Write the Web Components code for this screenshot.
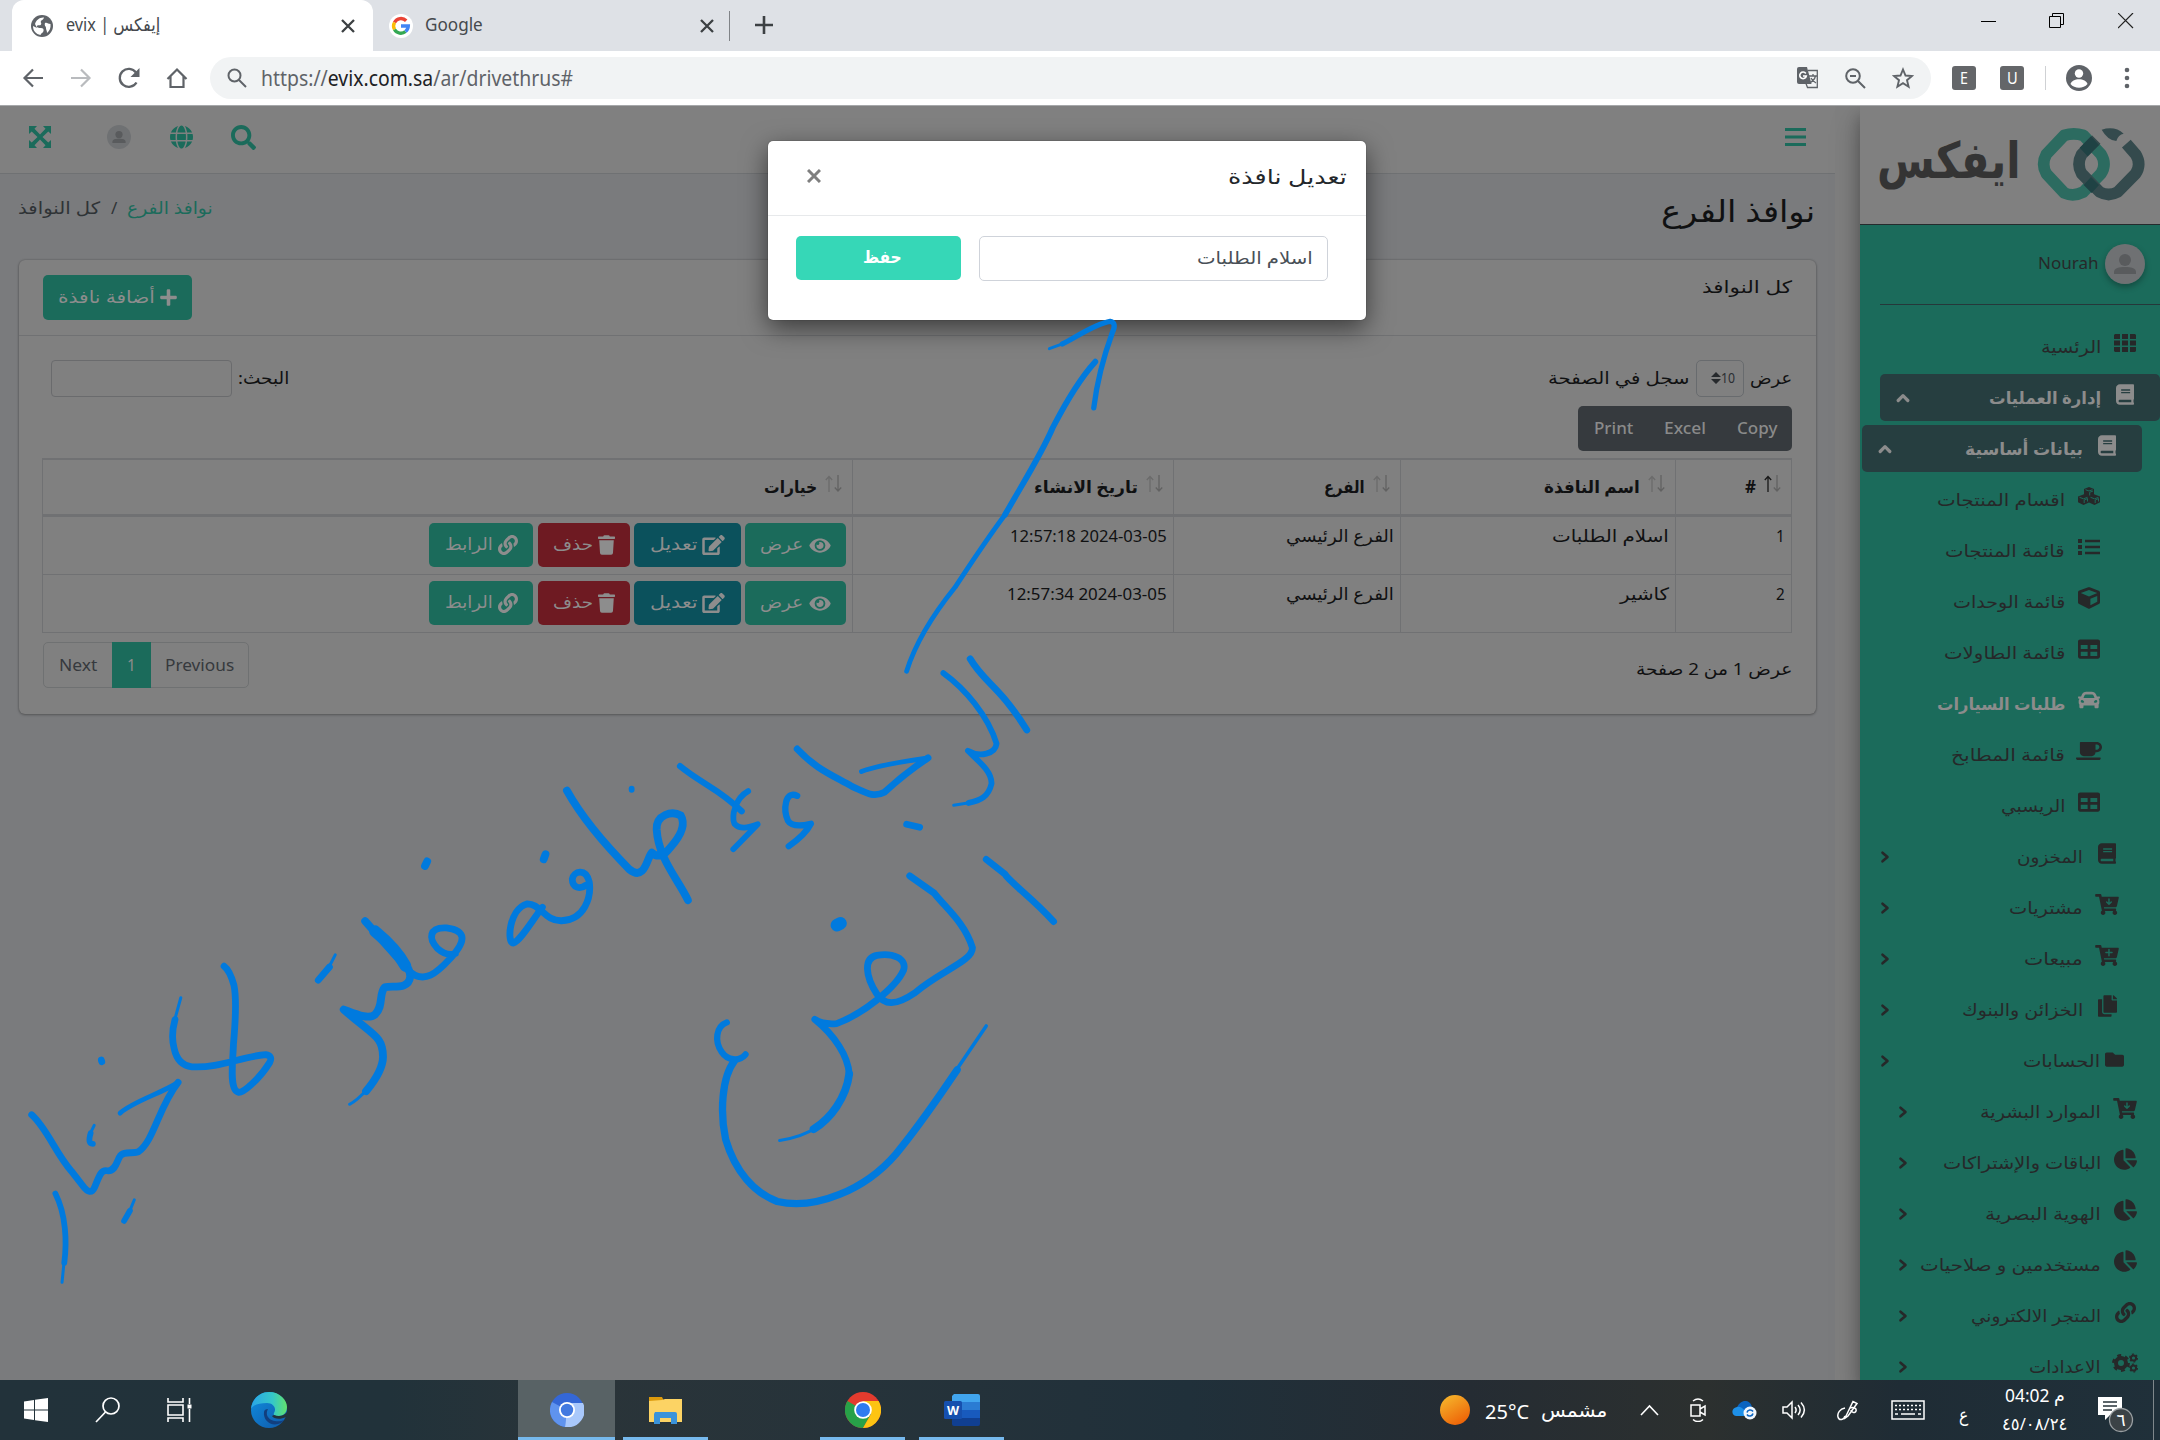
<!DOCTYPE html>
<html lang="ar">
<head>
<meta charset="utf-8">
<title>evix | إيفكس</title>
<style>
html,body{margin:0;padding:0;width:2160px;height:1440px;overflow:hidden;background:#7a7b7d}
body{display:flex;flex-direction:column;position:relative;font-family:"Noto Sans","DejaVu Sans",sans-serif}
</style>
</head>
<body>
<browser-tabs></browser-tabs>
<browser-toolbar></browser-toolbar>
<site-page></site-page>
<task-bar></task-bar>
<ink-layer></ink-layer>
<script>
const define=(name,html,after)=>{
  const t=document.createElement('template');t.innerHTML=html;
  customElements.define(name,class extends HTMLElement{
    connectedCallback(){
      if(this.shadowRoot)return;
      this.attachShadow({mode:'open'}).appendChild(t.content.cloneNode(true));
      if(after)after(this,this.shadowRoot);
    }
  });
};

/* Text fitted to a fixed advance width: w = width, s = font size, dy = baseline nudge */
define('fit-text',`<style>
:host{display:block;flex:none;white-space:nowrap}
span{display:inline-block;white-space:pre}
</style><span><slot></slot></span>`,(el,root)=>{
  const s=+el.getAttribute('s')||17,w=+el.getAttribute('w'),dy=+el.getAttribute('dy')||0;
  el.style.width=w+'px';el.style.height=Math.round(s*1.4)+'px';el.style.fontSize=s+'px';el.style.lineHeight=Math.round(s*1.4)+'px';
  const sp=root.querySelector('span');
  const rtl=/[\u0600-\u06ff]/.test(el.textContent)&&!el.hasAttribute('ltr');
  el.dir=rtl?'rtl':'ltr';
  sp.style.transformOrigin=rtl?'right center':'left center';
  const n=sp.offsetWidth;
  sp.style.transform=`translateY(${dy}px) scaleX(${w/n})`;
});

const FA={
search:['0 0 512 512','M505 442.7L405.3 343c-4.5-4.5-10.6-7-17-7H372c27.6-35.3 44-79.7 44-128C416 93.1 322.9 0 208 0S0 93.1 0 208s93.1 208 208 208c48.3 0 92.7-16.4 128-44v16.3c0 6.4 2.5 12.5 7 17l99.7 99.7c9.4 9.4 24.6 9.4 33.9 0l28.3-28.3c9.4-9.4 9.4-24.6.1-34zM208 336c-70.7 0-128-57.2-128-128 0-70.7 57.2-128 128-128 70.7 0 128 57.2 128 128 0 70.7-57.2 128-128 128z'],
globe:['0 0 496 512','M336.5 160C322 70.7 287.8 8 248 8s-74 62.7-88.5 152h177zM152 256c0 22.2 1.2 43.5 3.3 64h185.3c2.1-20.5 3.3-41.8 3.3-64s-1.2-43.5-3.3-64H155.3c-2.1 20.5-3.3 41.8-3.3 64zm324.7-96c-28.6-67.9-86.5-120.4-158-141.6 24.4 33.8 41.2 84.7 50 141.6h108zM177.2 18.4C105.8 39.6 47.8 92.1 19.3 160h108c8.7-56.9 25.5-107.8 49.9-141.6zM487.4 192H372.7c2.1 21 3.3 42.5 3.3 64s-1.2 43-3.3 64h114.6c5.5-20.5 8.6-41.8 8.6-64s-3.1-43.5-8.5-64zM120 256c0-21.5 1.2-43 3.3-64H8.6C3.2 212.5 0 233.8 0 256s3.2 43.5 8.6 64h114.6c-2-21-3.2-42.5-3.2-64zm39.5 96c14.5 89.3 48.7 152 88.5 152s74-62.7 88.5-152h-177zm159.3 141.6c71.4-21.2 129.4-73.7 158-141.6h-108c-8.8 56.9-25.6 107.8-50 141.6zM19.3 352c28.6 67.9 86.5 120.4 158 141.6-24.4-33.8-41.2-84.7-50-141.6h-108z'],
trash:['0 0 448 512','M432 32H312l-9.4-18.7A24 24 0 0 0 281.1 0H166.8a23.72 23.72 0 0 0-21.4 13.3L136 32H16A16 16 0 0 0 0 48v32a16 16 0 0 0 16 16h416a16 16 0 0 0 16-16V48a16 16 0 0 0-16-16zM53.2 467a48 48 0 0 0 47.9 45h245.8a48 48 0 0 0 47.9-45L416 128H32z'],
eye:['0 0 576 512','M572.52 241.4C518.29 135.59 410.93 64 288 64S57.68 135.64 3.48 241.41a32.35 32.35 0 0 0 0 29.19C57.71 376.41 165.07 448 288 448s230.32-71.64 284.52-177.41a32.35 32.35 0 0 0 0-29.19zM288 400a144 144 0 1 1 144-144 143.93 143.93 0 0 1-144 144zm0-240a95.31 95.31 0 0 0-25.31 3.79 47.85 47.85 0 0 1-66.9 66.9A95.78 95.78 0 1 0 288 160z'],
edit:['0 0 576 512','M402.6 83.2l90.2 90.2c3.8 3.8 3.8 10 0 13.8L274.4 405.6l-92.8 10.3c-12.4 1.4-22.9-9.1-21.5-21.5l10.3-92.8L388.8 83.2c3.8-3.8 10-3.8 13.8 0zm162-22.9l-48.8-48.8c-15.2-15.2-39.9-15.2-55.2 0l-35.4 35.4c-3.8 3.8-3.8 10 0 13.8l90.2 90.2c3.8 3.8 10 3.8 13.8 0l35.4-35.4c15.2-15.3 15.2-40 0-55.2zM384 346.2V448H64V128h229.8c3.2 0 6.2-1.3 8.5-3.5l40-40c7.6-7.6 2.2-20.5-8.5-20.5H48C21.5 64 0 85.5 0 112v352c0 26.5 21.5 48 48 48h352c26.5 0 48-21.5 48-48V306.2c0-10.7-12.9-16-20.5-8.5l-40 40c-2.2 2.3-3.5 5.3-3.5 8.5z'],
link:['0 0 512 512','M326.612 185.391c59.747 59.809 58.927 155.698.36 214.59-.11.12-.24.25-.36.37l-67.2 67.2c-59.27 59.27-155.699 59.262-214.96 0-59.27-59.26-59.27-155.7 0-214.96l37.106-37.106c9.84-9.84 26.786-3.3 27.294 10.606.648 17.722 3.826 35.527 9.69 52.721 1.986 5.822.567 12.262-3.783 16.612l-13.087 13.087c-28.026 28.026-28.905 73.66-1.155 101.96 28.024 28.579 74.086 28.749 102.325.51l67.2-67.19c28.191-28.191 28.073-73.757 0-101.83-3.701-3.694-7.429-6.564-10.341-8.569a16.037 16.037 0 0 1-6.947-12.606c-.396-10.567 3.348-21.456 11.698-29.806l21.054-21.055c5.521-5.521 14.182-6.199 20.584-1.731a152.482 152.482 0 0 1 20.522 17.197zM467.547 44.449c-59.261-59.262-155.69-59.27-214.96 0l-67.2 67.2c-.12.12-.25.25-.36.37-58.566 58.892-59.387 154.781.36 214.59a152.454 152.454 0 0 0 20.521 17.196c6.402 4.468 15.064 3.789 20.584-1.731l21.054-21.055c8.35-8.35 12.094-19.239 11.698-29.806a16.037 16.037 0 0 0-6.947-12.606c-2.912-2.005-6.64-4.875-10.341-8.569-28.073-28.073-28.191-73.639 0-101.83l67.2-67.19c28.239-28.239 74.3-28.069 102.325.51 27.75 28.3 26.872 73.934-1.155 101.96l-13.087 13.087c-4.35 4.35-5.769 10.79-3.783 16.612 5.864 17.194 9.042 34.999 9.69 52.721.509 13.906 17.454 20.446 27.294 10.606l37.106-37.106c59.271-59.259 59.271-155.699.001-214.959z'],
book:['0 0 448 512','M448 360V24c0-13.3-10.7-24-24-24H96C43 0 0 43 0 96v320c0 53 43 96 96 96h328c13.3 0 24-10.7 24-24v-16c0-7.5-3.5-14.3-8.9-18.7-4.2-15.4-4.2-59.3 0-74.7 5.4-4.3 8.9-11.1 8.9-18.6zM128 134c0-3.3 2.7-6 6-6h212c3.3 0 6 2.7 6 6v20c0 3.3-2.7 6-6 6H134c-3.3 0-6-2.7-6-6v-20zm0 64c0-3.3 2.7-6 6-6h212c3.3 0 6 2.7 6 6v20c0 3.3-2.7 6-6 6H134c-3.3 0-6-2.7-6-6v-20zm253.4 250H96c-17.7 0-32-14.3-32-32 0-17.6 14.4-32 32-32h285.4c-1.9 17.1-1.9 46.9 0 64z'],
folder:['0 0 512 512','M464 128H272l-64-64H48C21.49 64 0 85.49 0 112v288c0 26.51 21.49 48 48 48h416c26.51 0 48-21.49 48-48V176c0-26.51-21.49-48-48-48z'],
copy:['0 0 448 512','M320 448v40c0 13.255-10.745 24-24 24H24c-13.255 0-24-10.745-24-24V120c0-13.255 10.745-24 24-24h72v296c0 30.879 25.121 56 56 56h168zm0-344V0H152c-13.255 0-24 10.745-24 24v368c0 13.255 10.745 24 24 24h272c13.255 0 24-10.745 24-24V128H344c-13.2 0-24-10.8-24-24zm120.971-31.029L375.029 7.029A24 24 0 0 0 358.059 0H352v96h96v-6.059a24 24 0 0 0-7.029-16.97z'],
pie:['0 0 544 512','M527.79 288H290.5l158.03 158.03c6.04 6.04 15.98 6.53 22.19.68 38.7-36.46 65.32-85.61 73.13-140.86 1.34-9.46-6.51-17.85-16.06-17.85zm-15.83-64.8C503.72 103.74 408.26 8.28 288.8.04 279.68-.59 272 7.1 272 16.24V240h223.77c9.14 0 16.82-7.68 16.19-16.8zM224 288V50.71c0-9.55-8.39-17.4-17.84-16.06C86.99 51.49-4.1 155.6.14 280.37 4.5 408.51 114.83 513.59 243.03 511.98c50.4-.63 96.97-16.87 135.26-44.03 7.9-5.6 8.42-17.23 1.57-24.08L224 288z'],
table:['0 0 512 512','M464 32H48C21.49 32 0 53.49 0 80v352c0 26.51 21.49 48 48 48h416c26.51 0 48-21.49 48-48V80c0-26.51-21.49-48-48-48zM224 416H64v-96h160v96zm0-160H64v-96h160v96zm224 160H288v-96h160v96zm0-160H288v-96h160v96z'],
cube:['0 0 512 512','M239.1 6.3l-208 78c-18.7 7-31.1 25-31.1 45v225.1c0 18.2 10.3 34.8 26.5 42.9l208 104c13.5 6.8 29.4 6.8 42.9 0l208-104c16.3-8.1 26.5-24.8 26.5-42.9V129.3c0-20-12.4-37.9-31.1-44.9l-208-78C262 2.2 250 2.2 239.1 6.3zM256 68.4l192 72v1.1l-192 78-192-78v-1.1l192-72zm32 356V275.5l160-65v133.9l-160 80z'],
coffee:['0 0 640 512','M192 384h192c53 0 96-43 96-96h32c70.6 0 128-57.4 128-128S582.6 32 512 32H120c-13.3 0-24 10.7-24 24v232c0 53 43 96 96 96zM512 96c35.3 0 64 28.7 64 64s-28.7 64-64 64h-32V96h32zm47.7 384H48.3c-47.6 0-61-64-36-64h583.3c25 0 11.8 64-35.9 64z'],
plus:['0 0 448 512','M416 208H272V64c0-17.67-14.33-32-32-32h-32c-17.67 0-32 14.33-32 32v144H32c-17.67 0-32 14.33-32 32v32c0 17.67 14.33 32 32 32h144v144c0 17.67 14.33 32 32 32h32c17.67 0 32-14.33 32-32V304h144c17.67 0 32-14.33 32-32v-32c0-17.67-14.33-32-32-32z'],
car:['0 0 512 512','M499.99 176h-59.87l-16.64-41.6C406.38 91.63 365.57 64 319.5 64h-127c-46.06 0-86.88 27.63-103.99 70.4L71.87 176H12.01C4.2 176-1.53 183.34.37 190.91l6 24C7.7 220.25 12.5 224 18.01 224h20.07C24.65 235.73 16 252.78 16 272v48c0 16.12 6.16 30.67 16 41.93V416c0 17.67 14.33 32 32 32h32c17.67 0 32-14.33 32-32v-32h256v32c0 17.67 14.33 32 32 32h32c17.67 0 32-14.33 32-32v-54.07c9.84-11.25 16-25.8 16-41.93v-48c0-19.22-8.65-36.27-22.07-48H494c5.51 0 10.31-3.75 11.64-9.09l6-24c1.89-7.57-3.84-14.91-11.65-14.91zm-352.06-17.83c7.29-18.22 24.94-30.17 44.57-30.17h127c19.63 0 37.28 11.95 44.57 30.17L384 208H128l19.93-49.83zM96 319.8c-19.2 0-32-12.76-32-31.9S76.8 256 96 256s48 28.71 48 47.85-28.8 15.95-48 15.95zm320 0c-19.2 0-48 3.19-48-15.95S396.8 256 416 256s32 12.76 32 31.9-12.8 31.9-32 31.9z'],
cart:['0 0 576 512','M528.12 301.319l47.273-208C578.806 78.301 567.391 64 551.99 64H159.208l-9.166-44.81C147.758 8.021 137.93 0 126.529 0H24C10.745 0 0 10.745 0 24v16c0 13.255 10.745 24 24 24h69.883l70.248 343.435C147.325 417.1 136 435.222 136 456c0 30.928 25.072 56 56 56s56-25.072 56-56c0-15.674-6.447-29.835-16.824-40h209.647C430.447 426.165 424 440.326 424 456c0 30.928 25.072 56 56 56s56-25.072 56-56c0-22.172-12.888-41.332-31.579-50.405l5.517-24.276c3.413-15.018-8.002-29.319-23.403-29.319H218.117l-6.545-32h293.145c11.206 0 20.92-7.754 23.403-18.681z']
};
const CUT='fill="none" stroke="#1b6b5b" stroke-width="36" stroke-linecap="round" stroke-linejoin="round"';
const MISC={
th:['0 0 22 18','<path d="M1 0h5v5H0V1zM8 0h6v5H8zM16 0h5l1 1v4h-6zM0 6.500h6v5H0zM8 6.500h6v5H8zM16 6.500h6v5h-6zM0 13h6v5H1l-1-1zM8 13h6v5H8zM16 13h6v4l-1 1h-5z"/>'],
list:['0 0 22 18','<path d="M0 1h4v4H0zM0 7h4v4H0zM0 13h4v4H0zM7 1.700h15v2.600H7zM7 7.700h15v2.600H7zM7 13.700h15v2.600H7z"/>'],
cubes:['0 0 22 18','<path fill="currentColor" d="M11 0l5 2v5.200l6 2.300v5.700L16.500 18 11 15.400 5.500 18 0 15.200V9.500l6-2.300V2z"/><g fill="none" stroke="#1b6b5b" stroke-width="1"><path d="M7.500 2.700L11 4l3.500-1.300M11.700 8.500V5.300L15 4M1.500 10.300l4 1.500 4-1.500M6.200 16v-3l3.300-1.500V14.500M12.500 10.300l4 1.500 4-1.500M17.200 16v-3l3.300-1.500V14.500"/></g>'],
cartdown:['0 0 576 512',`<path d="${FA.cart[1]}"/><path ${CUT} d="M336 120v128M280 195l56 56 56-56"/>`],
cartplus:['0 0 576 512',`<path d="${FA.cart[1]}"/><path ${CUT} d="M336 110v150M261 185h150"/>`],
cogs:['0 0 26 18','<g fill="none" stroke="currentColor"><circle cx="9" cy="9" r="5" stroke-width="4"/><circle cx="9" cy="9" r="7.700" stroke-width="2.400" stroke-dasharray="4 4.060"/><circle cx="21.500" cy="4" r="2.600" stroke-width="2"/><circle cx="21.500" cy="4" r="3.900" stroke-width="1.200" stroke-dasharray="2 2.080"/><circle cx="21.500" cy="14" r="2.600" stroke-width="2"/><circle cx="21.500" cy="14" r="3.900" stroke-width="1.200" stroke-dasharray="2 2.080"/></g>'],
up:['0 0 14 14','<path fill="none" stroke="currentColor" stroke-width="3.200" stroke-linecap="round" stroke-linejoin="round" d="M2.200 9.500L7 4.700l4.800 4.800"/>'],
right:['0 0 14 14','<path fill="none" stroke="currentColor" stroke-width="2.600" stroke-linecap="round" stroke-linejoin="round" d="M4.500 2.700L9.500 7l-5 4.300"/>'],
expand:['0 0 24 24','<path d="M1 1h8L6.500 3.700 12 9.500l5.500-5.800L15 1h8v8l-2.700-2.500L14.500 12l5.800 5.500L23 15v8h-8l2.500-2.700L12 14.500l-5.500 5.800L9 23H1v-8l2.700 2.500L9.500 12 3.700 6.500 1 9z"/>'],
person:['0 0 40 40','<circle cx="20" cy="20" r="20" fill="#6f7173"/><circle cx="20" cy="16" r="6" fill="#595b5d"/><path fill="#595b5d" d="M9 30v-2c0-4 5-5 11-5s11 1 11 5v2z"/>']
};
customElements.define('app-icon',class extends HTMLElement{
  connectedCallback(){
    if(this.shadowRoot)return;
    const n=this.getAttribute('n'),w=this.getAttribute('w')||20,h=this.getAttribute('h')||w;
    const [vb,body]=FA[n]?[FA[n][0],`<path d="${FA[n][1]}"/>`]:MISC[n];
    this.attachShadow({mode:'open'}).innerHTML=`<style>:host{display:block;flex:none;width:${w}px;height:${h}px}svg{display:block;fill:currentColor}</style><svg width="${w}" height="${h}" viewBox="${vb}">${body}</svg>`;
  }
});

define('browser-tabs',`<style>
:host{display:flex;height:51px;background:#dee1e6;align-items:stretch;color:#45494d}
.tab{display:flex;align-items:center;width:361px;margin-left:12px;box-sizing:border-box;padding:0 18px 0 19px;background:#fff;border-radius:12px 12px 0 0}
.tab svg:last-child{margin-left:auto}
.two{display:flex;align-items:center;width:357px;box-sizing:border-box;padding:0 15px 0 16px;border-right:1.500px solid #808387;height:30px;margin-top:11px}
.two svg:last-child{margin-left:auto}
fit-text{margin-left:13px}
.two fit-text{margin-left:12px}
.plus{margin:14px 0 0 25px}
.win{margin-left:auto;display:flex;align-items:center;gap:53px;padding:0 26px 9px 0}
</style>
<div class="tab"><svg width="22" height="22" viewBox="0 0 22 22"><circle cx="11" cy="11" r="11" fill="#5f6368"/><path fill="#fff" d="M13 2.500c-1 3-2 2-3 3.500s1 2 0 3.500-3 0-4 1.500 2 2 4 2 3 1 2.500 3-2.500 2-3 4C5 19 2 16 2 11l4 2-2-4C5 5 9 2 13 2.500zM14 8c2-1 3 1 5.500 1 .5 4-1 7-3.500 9 0-3-1-3-1-5s-2-2-1-5z"/></svg><fit-text w="94" s="18" dy="-1" ltr>evix | إيفكس</fit-text><svg width="14" height="14" viewBox="0 0 14 14"><path stroke="#3c4043" stroke-width="2.300" d="M1 1l12 12M13 1L1 13"/></svg></div>
<div class="two"><svg width="24" height="24" viewBox="0 0 24 24"><circle cx="12" cy="12" r="12" fill="#fff"/><g fill="none" stroke-width="3.400"><path stroke="#ea4335" d="M5.500 8.500a7.300 7.300 0 0 1 11.700-1.700"/><path stroke="#fbbc05" d="M5.500 15.500a7.300 7.300 0 0 1 0-7"/><path stroke="#34a853" d="M5.500 15.500a7.300 7.300 0 0 0 11 2"/><path stroke="#4285f4" d="M12 12h7.300a7.300 7.300 0 0 1-2.800 5.500"/></g></svg><fit-text w="58" s="18" dy="-2">Google</fit-text><svg width="14" height="14" viewBox="0 0 14 14"><path stroke="#3c4043" stroke-width="2.300" d="M1 1l12 12M13 1L1 13"/></svg></div>
<svg class="plus" width="18" height="22" viewBox="0 0 18 22"><path stroke="#3c4043" stroke-width="2.600" d="M9 2v18M0 11h18"/></svg>
<div class="win"><svg width="15" height="15"><path d="M0 7.500h15" stroke="#000"/></svg><svg width="16" height="16" fill="none" stroke="#000"><path d="M.5 3.500h11v11H.5zM3.500 3.500v-3h11v11h-3"/></svg><svg width="16" height="16" stroke="#222" stroke-width="1.200"><path d="M0 0l15 15M15 0L0 15"/></svg></div>`);

define('browser-toolbar',`<style>
:host{display:flex;height:55px;box-sizing:border-box;background:#fff;border-bottom:1px solid #a6a8aa;align-items:center;padding:0 22px 0 22px;color:#5f6368}
.nav{display:flex;gap:26px;width:188px}
.omni{display:flex;align-items:center;width:1721px;height:42px;border-radius:21px;background:#f1f3f4;box-sizing:border-box;padding:0 17px 0 17px}
.omni .r{margin-left:auto;display:flex;gap:26px;align-items:center}
fit-text{margin-left:14px}
b{font-weight:400;color:#202124}
.ext{display:grid;place-items:center;width:24px;height:24px;border-radius:3px;background:#646669;color:#fff;margin-left:24px}
.ext fit-text{margin:0}
.omni+.ext{margin-left:21px}
.bar{width:1px;height:24px;background:#cfd1d4;margin-left:21px}
.me{margin-left:20px}.dots{margin-left:32px}
svg{display:block;flex:none}
</style>
<div class="nav"><svg width="22" height="22" fill="none" stroke="currentColor" stroke-width="2.200"><path d="M21 11H3M11 2.500L2.500 11l8.500 8.500"/></svg><svg width="22" height="22" fill="none" stroke="#b9bbbe" stroke-width="2.200"><path d="M1 11h18M11 2.500l8.500 8.500-8.500 8.500"/></svg><svg width="22" height="22" fill="none" stroke="currentColor" stroke-width="2.300"><path d="M18.500 15.500a9 9 0 1 1-.5-10"/><path fill="currentColor" stroke="none" d="M21.500 1v9h-9z"/></svg><svg width="22" height="22" fill="none" stroke="currentColor" stroke-width="2.200"><path d="M1.500 12L11 2.500l9.500 9.500M4.500 9.500V20h13V9.500"/></svg></div>
<div class="omni"><svg width="20" height="20" fill="none" stroke="currentColor" stroke-width="2"><circle cx="7.500" cy="7.500" r="6"/><path d="M12 12l7 7"/></svg><fit-text w="312" s="21" dy="0">https://<b>evix.com.sa</b>/ar/drivethrus#</fit-text>
<div class="r"><svg width="22" height="22"><path fill="#5f6368" d="M2 0h8l4.500 17H2a2 2 0 0 1-2-2V2a2 2 0 0 1 2-2z"/><path fill="none" stroke="#5f6368" stroke-width="1.300" d="M11 3.500h9.300v17H10.500L9 16.500M12 9h8M16 7v2M18.500 9c-1 4-4 6-6 7M14 11c1 2 3 4 5 5"/><path fill="none" stroke="#fff" stroke-width="1.600" d="M8.800 6.500A3.300 3.300 0 1 0 9.300 9H6"/></svg><svg width="21" height="21" fill="none" stroke="currentColor" stroke-width="2"><circle cx="8" cy="8" r="6.800"/><path d="M5 8h6M13 13l7 7"/></svg><svg width="22" height="22" fill="none" stroke="currentColor" stroke-width="1.900"><path d="M11 2.500l2.500 6 6.500.5-5 4.200 1.600 6.500L11 16.200l-5.600 3.500L7 13.200 2 9l6.500-.5z"/></svg></div></div>
<div class="ext"><fit-text w="8" s="16">E</fit-text></div><div class="ext"><fit-text w="11" s="16">U</fit-text></div><div class="bar"></div>
<svg class="me" width="26" height="26"><circle cx="13" cy="13" r="13" fill="#5f6368"/><circle cx="13" cy="8.500" r="4.200" fill="#fff"/><path fill="#fff" d="M4.500 19c1.500-6.500 15.500-6.500 17 0-4 5-13 5-17 0z"/></svg>
<svg class="dots" width="6" height="22" fill="#5f6368"><circle cx="3" cy="3" r="2.300"/><circle cx="3" cy="11" r="2.300"/><circle cx="3" cy="19" r="2.300"/></svg>`);

define('site-page',`<style>
:host{display:flex;height:1274px;position:relative;background:#7f7f7f;overflow:hidden}
main{width:1835px;margin-right:25px;background:#7a7b7d;display:flex;flex-direction:column}
</style>
<main><page-header></page-header><page-title></page-title><windows-card></windows-card></main>
<side-bar></side-bar><edit-modal></edit-modal>`);

define('page-header',`<style>
:host{display:flex;height:68px;box-sizing:border-box;background:#808080;border-bottom:1px solid #6f7173;align-items:center;padding:0 29px 5px 28px;color:#1b6b5b}
.a{margin-left:55px}.g{margin-left:39px}.s{margin-left:38px}
svg{margin-left:auto}
</style>
<app-icon n="expand" w="24"></app-icon><app-icon class="a" n="person" w="24"></app-icon><app-icon class="g" n="globe" w="23" h="24"></app-icon><app-icon class="s" n="search" w="25"></app-icon>
<svg width="21" height="19" fill="#1b6b5b"><path d="M0 0h21v3H0zM0 7.500h21v3H0zM0 15h21v3H0z"/></svg>`);

define('page-title',`<style>
:host{display:flex;height:86px;box-sizing:border-box;padding:0 20px 16px 18px;align-items:center;color:#2f3336}
.c{color:#1b6b5b;margin-left:10px}.s{margin-left:11px}.h{margin-left:auto;color:#101112}
</style>
<fit-text w="82" s="17" dy="-1">كل النوافذ</fit-text><fit-text class="s" w="6" s="17" dy="-1">/</fit-text><fit-text class="c" w="86" s="17" dy="-1">نوافذ الفرع</fit-text><fit-text class="h" w="154" s="30" dy="2">نوافذ الفرع</fit-text>`);

define('act-button',`<style>
:host{display:flex;direction:rtl;height:44px;align-items:center;justify-content:center;gap:5px;border-radius:5px;background:#1b6b5b;color:#8d8d8d;flex:none}
</style><slot></slot>`);

define('sort-arrows',`<style>:host{display:block;flex:none;width:17px;height:18px}</style>
<svg width="17" height="18" fill="none" stroke-width="1.300"><g id="u" stroke="#6b6b6b"><path d="M4 17V2M.8 5L4 1.500 7.200 5"/></g><path stroke="#626262" d="M13 0v16M9.800 12.500L13 16l3.200-3.500"/></svg>`,
(el,r)=>{if(el.hasAttribute('asc'))r.getElementById('u').setAttribute('stroke','#181818')});

define('windows-table',`<style>
:host{display:block;width:1750px;box-sizing:border-box;border-top:2px solid #707173;border-right:1px solid #707173;color:#101112}
.row{display:grid;direction:rtl;grid-template-columns:116px 275px 227px 321px 810px;height:58px;box-sizing:border-box;border-bottom:1px solid #707173}
.row>div{border-left:1px solid #707173;display:flex;align-items:flex-start;padding:7px 6px 0 0;box-sizing:border-box;gap:4px}
.head{height:57px;border-bottom:3px solid #707173;font-weight:700}
.head>div{padding:15px 10px 0 0;gap:8px}
.red{background:#6e1a22}.teal{background:#0b515c}
.row>div.o{padding:6px 6px 0 0}
.red{margin-left:1px}
</style>
<div class="row head"><div><sort-arrows asc></sort-arrows><fit-text w="11" s="17">#</fit-text></div><div><sort-arrows></sort-arrows><fit-text w="96" s="17">اسم النافذة</fit-text></div><div><sort-arrows></sort-arrows><fit-text w="41" s="17">الفرع</fit-text></div><div><sort-arrows></sort-arrows><fit-text w="104" s="17">تاريخ الانشاء</fit-text></div><div><sort-arrows></sort-arrows><fit-text w="53" s="17">خيارات</fit-text></div></div>
<div id="rows"></div>`,(el,r)=>{
  const btns=`<act-button style="width:101px"><app-icon n="eye" w="22" h="19"></app-icon><fit-text w="43" s="17" dy="-1">عرض</fit-text></act-button><act-button class="teal" style="width:107px"><app-icon n="edit" w="23" h="20"></app-icon><fit-text w="47" s="17" dy="-1">تعديل</fit-text></act-button><act-button class="red" style="width:92px"><app-icon n="trash" w="17" h="20"></app-icon><fit-text w="40" s="17" dy="-1">حذف</fit-text></act-button><act-button style="width:104px"><app-icon n="link" w="20"></app-icon><fit-text w="48" s="17" dy="-1">الرابط</fit-text></act-button>`;
  r.getElementById('rows').innerHTML=[['1',9,'اسلام الطلبات',117,'12:57:18',157],['2',9,'كاشير',49,'12:57:34',160]].map(([n,nw,t,w,d,dw])=>
   `<div class="row"><div><fit-text w="${nw}" s="17">${n}</fit-text></div><div><fit-text w="${w}" s="17">${t}</fit-text></div><div><fit-text w="108" s="17">الفرع الرئيسي</fit-text></div><div><fit-text w="${dw}" s="17">${d} 2024-03-05</fit-text></div><div class="o">${btns}</div></div>`).join('');
});

define('windows-card',`<style>
:host{display:block;width:1797px;height:454px;margin-left:19px;box-sizing:border-box;background:#808080;border-radius:6px;box-shadow:0 0 2px rgba(0,0,0,.25),0 1px 3px rgba(0,0,0,.25);color:#101112}
.head{display:flex;height:76px;box-sizing:border-box;border-bottom:1px solid #707173;padding:15px 24px 0;justify-content:space-between}
.head act-button{width:149px;height:45px}
.ctl{display:flex;height:38px;margin-top:23px;padding:0 24px 0 32px;align-items:center;gap:6px}
.in{width:181px;height:37px;box-sizing:border-box;border:1px solid #6a6b6d;border-radius:4px}
.sel{width:48px;height:37px;box-sizing:border-box;border:1px solid #686b6e;border-radius:5px;display:flex;align-items:center;padding-left:14px;gap:0;color:#2a2e32}
.sp{flex:1}
.grp{display:flex;width:214px;height:45px;box-sizing:border-box;margin:9px 24px 7px auto;padding:0 15px 0 16px;justify-content:space-between;align-items:center;border-radius:5px;background:#363a3e;color:#8a8a8a;font-weight:500}
windows-table{margin-left:23px}
.foot{display:flex;justify-content:space-between;padding:9px 24px 0;align-items:flex-start}
.pg{display:flex;width:206px;height:46px;box-sizing:border-box;border:1px solid #6f7172;border-radius:5px;align-items:center;color:#36393d}
.pg b{display:grid;place-items:center;width:39px;height:46px;background:#1b6b5b;color:#8d8d8d;font-weight:400;margin:0 14px 0 15px}
</style>
<div class="head"><act-button><app-icon n="plus" w="17" h="19"></app-icon><fit-text w="97" s="17" dy="-1">أضافة نافذة</fit-text></act-button><fit-text w="90" s="17">كل النوافذ</fit-text></div>
<div class="ctl"><div class="in"></div><fit-text w="51" s="17">البحث:</fit-text><div class="sp"></div><fit-text w="142" s="17">سجل في الصفحة</fit-text><div class="sel"><svg width="10" height="12" fill="#26292c"><path d="M0 5L5 0l5 5zM0 7h10l-5 5z"/></svg><fit-text w="14" s="14">10</fit-text></div><fit-text w="42" s="17">عرض</fit-text></div>
<div class="grp"><fit-text w="39" s="17" dy="-1">Print</fit-text><fit-text w="42" s="17" dy="-1">Excel</fit-text><fit-text w="40" s="17" dy="-1">Copy</fit-text></div>
<windows-table></windows-table>
<div class="foot"><div class="pg"><fit-text style="margin-left:15px" w="38" s="17">Next</fit-text><b><fit-text w="9" s="17">1</fit-text></b><fit-text w="69" s="17">Previous</fit-text></div><fit-text style="margin-top:15px" w="156" s="17">عرض 1 من 2 صفحة</fit-text></div>`);

define('brand-logo',`<style>
:host{display:flex;flex:none;box-sizing:border-box;height:119px;background:#808080;border-bottom:1px solid #252b2d;align-items:center;justify-content:space-between;padding:0 15px 0 17px;color:#343434;font-weight:700;font-family:"DejaVu Sans",sans-serif}
</style>
<fit-text w="144" s="50" dy="-4">ايفكس</fit-text>
<svg width="108" height="76" viewBox="890 380 324 228" style="margin-top:-1px"><g fill="none" stroke-width="35" stroke-linejoin="round"><path stroke="#2c6b60" d="M972 405Q1000 396 1029 405L1082 462Q1100 492 1082 520L1029 575Q1000 590 972 578L918 520Q902 492 918 462Z"/><path stroke="#344a4d" d="M1068 418L1024 462Q1008 492 1024 520L1078 575Q1105 590 1132 575L1186 520Q1204 492 1186 462L1158 430"/></g><path fill="#1f4244" d="M1052 408l24 26-34 34-24-26zM1052 530l24 24-22 24-24-24z"/><path fill="#344a4d" d="M1084 388q40-12 66 12q-16 2-22 22q-26-2-44-34z"/></svg>`);

define('side-item',`<style>
:host{display:flex;direction:rtl;width:280px;height:47px;box-sizing:border-box;margin:0 0 4px auto;padding-right:21px;align-items:center;border-radius:5px;color:#262829;flex:none}
:host([lv="2"]){margin-right:18px}:host([lv="3"]){margin-right:36px;width:260px}
:host([on]){background:#263e40;color:#8c8c8c;font-weight:700}
:host([cur]){color:#8c8c8c;font-weight:700}
.i{width:28px;display:grid;justify-items:center;margin:-7px 0 0 10px}
.c{margin:0 auto 0 16px}
:host([near]){padding-right:15px}:host([near]) .i{margin:-3px 0 0 2px;width:25px}
</style><div class="i"></div><slot></slot><div class="c"></div>`,(el,r)=>{
  const k=el.getAttribute('i'),sz={th:[22,18],book:[18,21],cubes:[22,18],list:[22,18],cube:[22,22],table:[22,22],car:[22,22],coffee:[26,22],cartdown:[24,21],cartplus:[24,21],copy:[19,22],folder:[19,19],pie:[23,22],link:[21,21],cogs:[26,20]}[k];
  r.querySelector('.i').innerHTML=`<app-icon n="${k}" w="${sz[0]}" h="${sz[1]}"></app-icon>`;
  const c=el.getAttribute('c');if(c)r.querySelector('.c').innerHTML=`<app-icon n="${c}" w="14"></app-icon>`;
});

define('side-bar',`<style>
:host{display:flex;flex-direction:column;width:300px;height:1274px;overflow:hidden;background:#1b6b5b;flex:none;box-shadow:0 14px 28px rgba(0,0,0,.25),0 10px 14px rgba(0,0,0,.22)}
.user{display:flex;height:80px;box-sizing:border-box;margin-left:20px;border-bottom:1px solid #25383a;padding:0 15px 2px 0;align-items:center;justify-content:flex-end;gap:7px;color:#262829;flex:none}
.user app-icon{border-radius:50%;box-shadow:0 3px 6px rgba(0,0,0,.3)}
nav{display:flex;flex-direction:column;padding-top:18px}
</style><brand-logo></brand-logo><div class="user"><fit-text w="60" s="17" dy="-1">Nourah</fit-text><app-icon n="person" w="40"></app-icon></div><nav></nav>`,(el,r)=>{
  r.querySelector('nav').innerHTML=[
  [1,'th','الرئسية',60],[1,'book','إدارة العمليات',112,'up','on'],[2,'book','بيانات أساسية',118,'up','on'],
  [3,'cubes','اقسام المنتجات',128],[3,'list','قائمة المنتجات',120],[3,'cube','قائمة الوحدات',112],[3,'table','قائمة الطاولات',121],[3,'car','طلبات السيارات',128,'','cur'],[3,'coffee','قائمة المطابخ',114],[3,'table','الريسبي',64],
  [2,'book','المخزون',66,'right'],[2,'cartdown','مشتريات',74,'right'],[2,'cartplus','مبيعات',59,'right'],[2,'copy','الخزائن والبنوك',121,'right'],[2,'folder','الحسابات',77,'right','near'],
  [1,'cartdown','الموارد البشرية',121,'right'],[1,'pie','الباقات والإشتراكات',158,'right'],[1,'pie','الهوية البصرية',116,'right'],[1,'pie','مستخدمين و صلاحيات',181,'right'],[1,'link','المتجر الالكتروني',130,'right'],[1,'cogs','الاعدادات',72,'right']
  ].map(([l,i,t,w,c,f])=>`<side-item lv="${l}" i="${i}" ${c?`c="${c}"`:''} ${f||''}><fit-text w="${w}" s="17">${t}</fit-text></side-item>`).join('');
});

/* Dialog floats over the dimmed page */
define('edit-modal',`<style>
:host{position:absolute;left:768px;top:35px;width:598px;height:179px;background:#fff;border-radius:5px;box-shadow:0 0 1px #222,0 8px 26px rgba(0,0,0,.55);display:flex;flex-direction:column}
.h{display:flex;height:75px;box-sizing:border-box;border-bottom:1px solid #e7e9eb;align-items:center;justify-content:space-between;padding:0 19px 3px 39px;color:#23272b}
.h svg{margin-top:-2px}
.b{display:flex;padding:20px 38px 0 28px;gap:18px;align-items:flex-start}
act-button{width:165px;height:44px;background:#36d7b7;color:#fff;font-weight:700}
act-button fit-text{margin-left:4px;position:static}
.sp{width:4px;flex:none;order:2}
.in{display:flex;width:350px;height:45px;box-sizing:border-box;border:1px solid #cfd3da;border-radius:5px;align-items:center;justify-content:flex-end;padding-right:14px;color:#495057}
act-button{box-sizing:border-box;padding-left:8px}
</style>
<div class="h"><svg width="14" height="14"><path stroke="#7f7f7f" stroke-width="3" d="M1 1l12 12M13 1L1 13"/></svg><fit-text w="119" s="20">تعديل نافذة</fit-text></div>
<div class="b"><act-button><fit-text w="39" s="17" dy="-1" style="margin:0">حفظ</fit-text></act-button><div class="in"><fit-text w="116" s="17" dy="-1">اسلام الطلبات</fit-text></div></div>`);

/* Pen strokes: every entry is [stroke width, path] */
define('ink-layer',`<style>:host{position:absolute;left:0;top:0;width:2160px;height:1440px;pointer-events:none}svg{display:block}</style>
<svg width="2160" height="1440" fill="none" stroke="#007ade" stroke-linecap="round" stroke-linejoin="round"><g id="a" transform="translate(0 640) scale(.4464 .4209)"></g><g id="b" transform="translate(540 300) scale(.3827 .5931)"></g></svg>`,(el,r)=>{
  const put=(id,list)=>r.getElementById(id).innerHTML=list.map(([w,d])=>`<path vector-effect="non-scaling-stroke" stroke-width="${w<4?w:w+.8}" d="${d}"/>`).join('');
  put('a',[
  [6,'M71 1128C105 1160 125 1220 160 1262L185 1296Q203 1322 212 1300C222 1275 226 1258 240 1261C258 1264 262 1238 268 1228C275 1212 300 1222 310 1216C345 1190 355 1110 399 1051'],[4,'M399 1051C360 1078 300 1095 269 1124'],
  [5,'M124 1315C148 1365 150 1430 144 1480'],[3,'M145 1460L139 1526'],[3,'M301 1330L290 1358'],[5,'M291 1356L278 1380'],
  [3,'M211 1153L201 1175'],[5,'M203 1172C198 1190 200 1197 208 1197'],[6,'M227 998L228 1002'],
  [3,'M405 850L392 900'],[6,'M392 902C386 925 385 950 390 970C396 1000 410 1012 430 1014C490 1018 540 990 595 985Q612 988 604 1004C580 1045 545 1075 535 1075C512 1070 522 1000 523 960C528 900 530 850 524 820Q515 785 502 775'],
  [3,'M751 748L738 775'],[6,'M738 777L713 808'],
  [3,'M783 1103C798 1096 812 1080 825 1065'],[7,'M820 1072C845 1040 858 1010 858 990C858 940 835 940 770 878C800 890 825 902 840 890C860 870 848 840 862 825C880 820 915 832 919 800C918 785 915 780 905 765'],
  [7,'M818 668L910 778'],[11,'M840 692C870 718 892 742 908 774'],
  [6,'M915 785C950 820 980 790 1010 755C1045 715 1045 690 1000 684C960 682 960 710 980 733Q1000 752 1020 745'],
  [7,'M957 526L952 537'],[7,'M1222 509L1218 521'],
  [6,'M1215 635C1190 670 1165 715 1150 720C1135 720 1140 640 1180 627C1210 625 1220 668 1258 667C1310 665 1325 610 1320 575C1312 540 1285 550 1282 568C1282 590 1300 592 1312 583'],
  [5,'M1415 353L1415 356'],
  [7,'M1270 358C1300 415 1340 470 1410 545C1445 575 1450 515 1460 505C1475 520 1490 510 1500 495C1530 460 1535 435 1525 417C1505 405 1470 415 1471 450C1475 520 1520 570 1541 618']]);
  put('b',[
  [4,'M958 626C985 570 1040 520 1085 484C1140 430 1160 410 1215 362'],[5,'M1215 362C1270 300 1310 260 1340 215Q1400 140 1451 104'],
  [3,'M1331 82L1365 74'],[4.500,'M1365 74C1400 63 1450 40 1490 36Q1508 38 1495 56C1470 100 1455 140 1447 182'],
  [6,'M1124 605C1160 645 1200 650 1272 725'],
  [5,'M1054 629C1110 655 1170 700 1193 748C1190 765 1150 772 1118 760C1150 780 1180 795 1180 815C1172 838 1150 844 1120 848'],[3,'M1130 847L1081 852'],
  [6,'M958 884L992 889'],
  [4,'M840 795C880 785 950 778 1014 772'],[6,'M1014 772C960 795 930 812 900 830C870 840 850 830 815 820C760 800 720 790 672 757'],
  [5.500,'M672 836C640 826 635 860 648 878C660 890 690 886 708 883C695 900 670 912 650 921'],
  [5.500,'M366 786C420 815 470 825 527 862'],
  [5,'M544 828C510 840 500 870 508 883C525 895 550 888 569 884L505 926'],
  [6,'M1166 943L1215 968C1225 980 1290 1010 1342 1048'],
  [6,'M966 971L1030 1000C1060 1025 1110 1050 1130 1092C1130 1115 1050 1130 980 1168C930 1190 900 1190 880 1170C850 1140 845 1110 880 1105C920 1100 960 1110 950 1130C930 1160 840 1205 775 1220Q740 1222 718 1213C770 1240 805 1275 808 1305'],
  [7,'M808 1305C800 1345 760 1380 715 1398'],[3,'M725 1394C700 1405 660 1414 626 1417'],
  [12,'M776 1054L785 1051'],
  [5.500,'M488 1218C460 1225 455 1250 475 1268C490 1282 520 1285 537 1272'],
  [6.500,'M508 1283C475 1310 470 1370 485 1415C510 1470 560 1505 620 1520C720 1535 850 1500 930 1440C1000 1385 1040 1345 1090 1298'],[3.500,'M1080 1306L1166 1224']]);
});

define('task-bar',`<style>
:host{display:flex;height:60px;background:linear-gradient(90deg,#22323a 0,#21323a 18%,#2a3439 27%,#26333a 40%,#20303a 55%,#252c33 68%,#2c302f 79%,#1f2c35 88%,#20303a 100%);color:#fff}
.c{display:flex;align-items:center;justify-content:center;flex:none;box-sizing:border-box}
.run{border-bottom:3px solid #76b9ed;padding-top:3px}
.on{background:#586265}
svg{display:block;flex:none}
.clock{flex-direction:column;gap:4px}
</style>
<div class="c" style="width:72px"><svg width="24" height="24" fill="#fff"><path d="M0 3.500L10 2v9.500H0zM11 1.800L24 0v11.500H11zM0 12.500h10V22L0 20.500zM11 12.500h13V24l-13-1.800z"/></svg></div>
<div class="c" style="width:72px"><svg width="26" height="26" fill="none" stroke="#fff" stroke-width="1.700"><circle cx="16" cy="9" r="8"/><path d="M10.500 15L1 25"/></svg></div>
<div class="c" style="width:72px"><svg width="26" height="24" fill="none" stroke="#fff" stroke-width="1.600"><path d="M1 0v4h15V0M1 7h15v10H1zM1 24v-4h15v4M22.500 0v6M22.500 11v13"/><path fill="#fff" stroke="none" d="M20.500 6.500h4v4h-4z"/></svg></div>
<div class="c" style="width:106px"><svg width="36" height="36" viewBox="0 0 36 36"><defs><linearGradient id="e1"><stop offset="0" stop-color="#2aa5e8"/><stop offset=".6" stop-color="#35c7c8"/><stop offset="1" stop-color="#62e26c"/></linearGradient><linearGradient id="e2" x2="1" y2="1"><stop offset="0" stop-color="#0f8ee0"/><stop offset="1" stop-color="#1058a8"/></linearGradient></defs><circle cx="18" cy="18" r="18" fill="url(#e2)"/><path fill="url(#e1)" d="M0 17C1 7 9 0 18 0c11 0 18 8 18 15 0 6-4 9-8 9s-6-1-5-3c3-5-1-10-7-10C8 11 2 13 0 17z"/><path fill="#123f7e" d="M13 20c-1 8 6 14 14 12 3-1 5-2 6-4-4 2-13 2-16-3-2-3-1-6 0-8-2 0-4 1-4 3z"/><path fill="#22323a" d="M21 24c2 3 8 4 14 1 1-1 1-3 1-5-3 4-8 5-13 3z"/></svg></div>
<div class="c" style="width:196px"></div>
<div class="c run on" style="width:97px"><svg width="34" height="34" viewBox="0 0 34 34"><circle cx="17" cy="17" r="17" fill="#3467d6"/><path fill="#5f93ee" d="M17 17L2 9a17 17 0 0 0 13 25z"/><path fill="#a9c8fb" d="M17 17L15 34A17 17 0 0 0 33 10H17z"/><circle cx="17" cy="17" r="8" fill="#fff"/><circle cx="17" cy="17" r="6.200" fill="#4279e0"/></svg></div>
<div class="c" style="width:8px"></div>
<div class="c run" style="width:85px"><svg width="33" height="27" viewBox="0 0 33 27"><path fill="#dc9a0c" d="M0 0h13l2 4H0z"/><path fill="#fcd364" d="M0 4l13-1 3-1h17v23H0z"/><path fill="#3b93da" d="M6 15h20a2 2 0 0 1 2 2v10h-6v-6H11v6H5V17z"/></svg></div>
<div class="c" style="width:112px"></div>
<div class="c run" style="width:85px"><svg width="36" height="36" viewBox="0 0 36 36"><circle cx="18" cy="18" r="18" fill="#e33b2e"/><path fill="#27a148" d="M18 18L2.400 9A18 18 0 0 0 18 36l8-14z"/><path fill="#fdc412" d="M18 36A18 18 0 0 0 33.600 9H18l8 13z"/><circle cx="18" cy="18" r="8.800" fill="#fff"/><circle cx="18" cy="18" r="7" fill="#2f7bf0"/></svg></div>
<div class="c" style="width:14px"></div>
<div class="c run" style="width:85px"><svg width="36" height="32" viewBox="0 0 36 32"><path fill="#41a5ee" d="M10 0h24a2 2 0 0 1 2 2v6H8V2z"/><path fill="#2b7cd3" d="M8 8h28v8H8z"/><path fill="#185abd" d="M8 16h28v8H8z"/><path fill="#103f91" d="M8 24h28v6a2 2 0 0 1-2 2H10a2 2 0 0 1-2-2z"/><rect y="7" width="18" height="18" rx="1.500" fill="#1650ae"/><text x="9" y="20.500" font-size="12.500" font-weight="700" text-anchor="middle" fill="#fff">W</text></svg></div>
<div class="c" style="width:436px"></div>
<svg style="margin-top:15px" width="30" height="30"><defs><linearGradient id="s" x2=".6" y2="1"><stop offset="0" stop-color="#f6bd2f"/><stop offset="1" stop-color="#ee6508"/></linearGradient></defs><circle cx="15" cy="15" r="15" fill="url(#s)"/></svg>
<div class="c" style="margin-left:15px"><fit-text w="44" s="20" dy="2">25°C</fit-text></div>
<div class="c" style="margin-left:12px"><fit-text w="66" s="19" dy="0">مشمس</fit-text></div>
<div class="c" style="width:84px"><svg width="19" height="12" fill="none" stroke="#fff" stroke-width="1.600"><path d="M1 11l8.500-9L18 11"/></svg></div>
<div class="c" style="width:14px"><svg width="18" height="24" fill="none" stroke="#fff" stroke-width="1.500"><path d="M2 7h9v11H2zM11 11l5-3v9l-5-3M4 3c3-2.500 7-2.500 10 0M4 21.500c3 2.500 7 2.500 10 0"/></svg></div>
<div class="c" style="width:80px"><svg width="26" height="20"><path fill="#0b64c0" d="M5 8C8-1 18-1 20 7c5 1 5 9 0 9H5z"/><path fill="#1e90e8" d="M5 7c5-1 8 4 12 9H4C-1 15-1 8 5 7z"/><circle cx="18" cy="13" r="6.500" fill="#f2f7fc"/><path fill="none" stroke="#0b64c0" stroke-width="1.600" d="M15 12.500a3.300 3.300 0 0 1 6-1M21 13.500a3.300 3.300 0 0 1-6 1"/></svg></div>
<div class="c" style="width:17px"><svg width="24" height="20" fill="none" stroke="#fff" stroke-width="1.500"><path d="M1 7h4l5-5v16l-5-5H1zM13 7c1.500 2 1.500 4 0 6M16 5c3 3.500 3 6.500 0 10M19 2.500c4.500 5 4.500 10 0 15"/></svg></div>
<div class="c" style="width:91px"><svg width="22" height="22" fill="none" stroke="#fff" stroke-width="1.500"><path d="M9 17L16 2.500l4 2L11 17l-4 3zM8 9c-5 1-8 5-7 9s6 3 7-1M13 9c3-1 7 0 6 3s-5 1-5-1"/></svg></div>
<div class="c" style="width:29px"><svg width="34" height="20" fill="none" stroke="#fff" stroke-width="1.500"><path d="M1 1h32v18H1z"/><path stroke-dasharray="2 2" d="M4 5.500h26M4 9.500h26"/><path d="M4 14h3M10 14h14M27 14h3"/></svg></div>
<div class="c" style="width:84px"><fit-text w="9" s="19" dy="4">ع</fit-text></div>
<div class="c clock" style="margin-left:-4px"><fit-text w="60" s="18" ltr dy="-1">04:02 م</fit-text><fit-text w="65" s="17" ltr dy="-1">٤٥/٠٨/٢٤</fit-text></div>
<svg style="margin:15px 0 0 31px" width="37" height="38"><path fill="#fff" d="M0 2h24v18H12l-5 5v-5H0z"/><path stroke="#27333a" stroke-width="1.400" d="M5 7h14M5 11h14M5 15h9"/><circle cx="23" cy="25" r="11.500" fill="#3b4246" stroke="#9a9fa2" stroke-width="1.300"/><text x="23" y="31" font-size="17" text-anchor="middle" fill="#fff">٦</text></svg>
<div style="margin-left:auto;width:1px;height:60px;background:#7f878b;margin-right:6px;flex:none"></div>`);
</script>
</body>
</html>
